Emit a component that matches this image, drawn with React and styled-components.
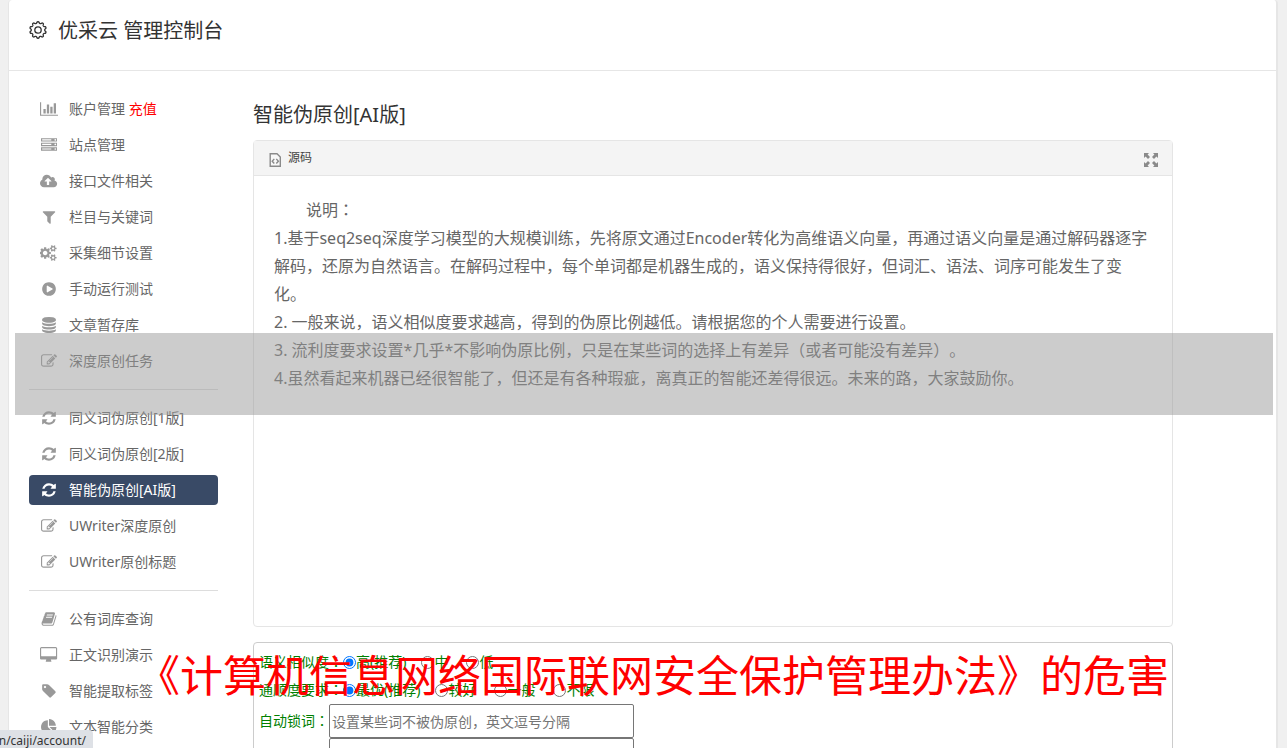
import React from 'react'
import styled, { createGlobalStyle } from 'styled-components'

const ICONS = {
  chart: [2048, 'M640 896v512h-256v-512h256zm384-512v1024h-256v-1024h256zm1024 1152v128h-2048v-1536h128v1408h1920zm-640-896v768h-256v-768h256zm384-384v1152h-256v-1152h256z'],
  server: [1792, 'M128 1408h1024v-128h-1024v128zm0-512h1024v-128h-1024v128zm1568 448q0-40-28-68t-68-28-68 28-28 68 28 68 68 28 68-28 28-68zm-1568-960h1024v-128h-1024v128zm1568 448q0-40-28-68t-68-28-68 28-28 68 28 68 68 28 68-28 28-68zm0-512q0-40-28-68t-68-28-68 28-28 68 28 68 68 28 68-28 28-68zm96 832v384h-1792v-384h1792zm0-512v384h-1792v-384h1792zm0-512v384h-1792v-384h1792z'],
  upload: [1920, 'M1280 928q0-14-9-23l-352-352q-9-9-23-9t-23 9l-351 351q-10 12-10 24 0 14 9 23t23 9h224v352q0 13 9.5 22.5t22.5 9.5h192q13 0 22.5-9.5t9.5-22.5v-352h224q13 0 22.5-9.5t9.5-22.5zm640 288q0 159-112.5 271.5t-271.5 112.5h-1088q-185 0-316.5-131.5t-131.5-316.5q0-130 70-240t188-165q-2-30-2-43 0-212 150-362t362-150q156 0 285.5 87t188.5 231q71-62 166-62 106 0 181 75t75 181q0 76-41 138 130 31 213.5 135.5t83.5 238.5z'],
  filter: [1792, 'M1595 295q17 41-14 70l-493 493v742q0 42-39 59-13 5-25 5-27 0-45-19l-256-256q-19-19-19-45v-486l-493-493q-31-29-14-70 17-39 59-39h1280q42 0 59 39z'],
  cogs: [1920, 'M832 896q0-106-75-181t-181-75-181 75-75 181 75 181 181 75 181-75 75-181zm768 512q0-52-38-90t-90-38-90 38-38 90q0 53 37.5 90.5t90.5 37.5 90.5-37.5 37.5-90.5zm0-1024q0-52-38-90t-90-38-90 38-38 90q0 53 37.5 90.5t90.5 37.5 90.5-37.5 37.5-90.5zm-384 421v185q0 10-7 19.5t-16 10.5l-155 24q-11 35-32 76 34 48 90 115 7 11 7 20 0 12-7 19-23 30-82.5 89.5t-78.5 59.5q-11 0-21-7l-115-90q-37 19-77 31-11 108-23 155-7 24-30 24h-186q-11 0-20-7.5t-10-17.5l-23-153q-34-10-75-31l-118 89q-7 7-20 7-11 0-21-8-144-133-144-160 0-9 7-19 10-14 41-53t47-61q-23-44-35-82l-152-24q-10-1-17-9.5t-7-19.5v-185q0-10 7-19.5t16-10.5l155-24q11-35 32-76-34-48-90-115-7-11-7-20 0-12 7-20 22-30 82-89t79-59q11 0 21 7l115 90q34-18 77-32 11-108 23-154 7-24 30-24h186q11 0 20 7.5t10 17.5l23 153q34 10 75 31l118-89q8-7 20-7 11 0 21 8 144 133 144 160 0 8-7 19-12 16-42 54t-45 60q23 48 34 82l152 23q10 2 17 10.5t7 19.5zm640 533v140q0 16-149 31-12 27-30 52 51 113 51 138 0 4-4 7-122 71-124 71-8 0-46-47t-52-68q-20 2-30 2t-30-2q-14 21-52 68t-46 47q-2 0-124-71-4-3-4-7 0-25 51-138-18-25-30-52-149-15-149-31v-140q0-16 149-31 13-29 30-52-51-113-51-138 0-4 4-7 4-2 35-20t59-34 30-16q8 0 46 46.5t52 67.5q20-2 30-2t30 2q51-71 92-112l6-2q4 0 124 70 4 3 4 7 0 25-51 138 17 23 30 52 149 15 149 31zm0-1024v140q0 16-149 31-12 27-30 52 51 113 51 138 0 4-4 7-122 71-124 71-8 0-46-47t-52-68q-20 2-30 2t-30-2q-14 21-52 68t-46 47q-2 0-124-71-4-3-4-7 0-25 51-138-18-25-30-52-149-15-149-31v-140q0-16 149-31 13-29 30-52-51-113-51-138 0-4 4-7 4-2 35-20t59-34 30-16q8 0 46 46.5t52 67.5q20-2 30-2t30 2q51-71 92-112l6-2q4 0 124 70 4 3 4 7 0 25-51 138 17 23 30 52 149 15 149 31z'],
  play: [1792, 'M896 128q209 0 385.5 103t279.5 279.5 103 385.5-103 385.5-279.5 279.5-385.5 103-385.5-103-279.5-279.5-103-385.5 103-385.5 279.5-279.5 385.5-103zm384 823q32-18 32-55t-32-55l-544-320q-31-19-64-1-32 19-32 56v640q0 37 32 56 16 8 32 8 17 0 32-9z'],
  database: [1792, 'M896 768q237 0 443-43t325-127v170q0 69-103 128t-280 93.5-385 34.5-385-34.5-280-93.5-103-128v-170q119 84 325 127t443 43zm0 768q237 0 443-43t325-127v170q0 69-103 128t-280 93.5-385 34.5-385-34.5-280-93.5-103-128v-170q119 84 325 127t443 43zm0-384q237 0 443-43t325-127v170q0 69-103 128t-280 93.5-385 34.5-385-34.5-280-93.5-103-128v-170q119 84 325 127t443 43zm0-1152q208 0 385 34.5t280 93.5 103 128v128q0 69-103 128t-280 93.5-385 34.5-385-34.5-280-93.5-103-128v-128q0-69 103-128t280-93.5 385-34.5z'],
  edit: [1792, 'M888 1184l116-116-152-152-116 116v56h96v96h56zm440-720q-16-16-33 1l-350 350q-17 17-1 33t33-1l350-350q17-17 1-33zm80 594v190q0 119-84.5 203.5t-203.5 84.5h-832q-119 0-203.5-84.5t-84.5-203.5v-832q0-119 84.5-203.5t203.5-84.5h832q63 0 117 25 15 7 18 23 3 17-9 29l-49 49q-14 14-32 8-23-6-45-6h-832q-66 0-113 47t-47 113v832q0 66 47 113t113 47h832q66 0 113-47t47-113v-126q0-13 9-22l64-64q15-15 35-7t20 29zm-96-738l288 288-672 672h-288v-288zm444 132l-92 92-288-288 92-92q28-28 68-28t68 28l152 152q28 28 28 68t-28 68z'],
  refresh: [1792, 'M1639 1056q0 5-1 7-64 268-268 434.5t-478 166.5q-146 0-282.5-55t-243.5-157l-129 129q-19 19-45 19t-45-19-19-45v-448q0-26 19-45t45-19h448q26 0 45 19t19 45-19 45l-137 137q71 66 161 102t187 36q134 0 250-65t186-179q11-17 53-117 8-23 30-23h192q13 0 22.5 9.5t9.5 22.5zm25-800v448q0 26-19 45t-45 19h-448q-26 0-45-19t-19-45 19-45l138-138q-148-137-349-137-134 0-250 65t-186 179q-11 17-53 117-8 23-30 23h-199q-13 0-22.5-9.5t-9.5-22.5v-7q65-268 270-434.5t480-166.5q146 0 284 55.5t245 156.5l130-129q19-19 45-19t45 19 19 45z'],
  book: [1792, 'M1703 478q40 57 18 129l-275 906q-19 64-76.5 107.5t-122.5 43.5h-923q-77 0-148.5-53.5t-99.5-131.5q-24-67-2-127 0-4 3-27t4-37q1-8-3-21.5t-3-19.5q2-11 8-21t16.5-23.5 16.5-23.5q23-38 45-91.5t30-91.5q3-10 .5-30t-.5-28q3-11 17-28t17-23q21-36 42-92t25-90q1-9-2.5-32t.5-28q4-13 22-30.5t22-22.5q19-26 42.5-84.5t27.5-96.5q1-8-3-25.5t-2-26.5q2-8 9-18t18-23 17-21q8-12 16.5-30.5t15-35 16-36 19.5-32 26.5-23.5 36-11.5 47.5 5.5l-1 3q38-9 51-9h761q74 0 114 56t18 130l-274 906q-36 119-71.5 153.5t-128.5 34.5h-869q-27 0-38 15-11 16-1 43 24 70 144 70h923q29 0 56-15.5t35-41.5l300-987q7-22 5-57 38 15 59 43zm-1064 2q-4 13 2 22.5t20 9.5h608q13 0 25.5-9.5t16.5-22.5l21-64q4-13-2-22.5t-20-9.5h-608q-13 0-25.5 9.5t-16.5 22.5zm-83 256q-4 13 2 22.5t20 9.5h608q13 0 25.5-9.5t16.5-22.5l21-64q4-13-2-22.5t-20-9.5h-608q-13 0-25.5 9.5t-16.5 22.5z'],
  desktop: [1920, 'M1792 992v-832q0-13-9.5-22.5t-22.5-9.5h-1600q-13 0-22.5 9.5t-9.5 22.5v832q0 13 9.5 22.5t22.5 9.5h1600q13 0 22.5-9.5t9.5-22.5zm128-832v1088q0 66-47 113t-113 47h-544q0 37 16 77.5t32 71 16 43.5q0 26-19 45t-45 19h-512q-26 0-45-19t-19-45q0-14 16-44t32-70 16-78h-544q-66 0-113-47t-47-113v-1088q0-66 47-113t113-47h1600q66 0 113 47t47 113z'],
  tag: [1792, 'M576 448q0-53-37.5-90.5t-90.5-37.5-90.5 37.5-37.5 90.5 37.5 90.5 90.5 37.5 90.5-37.5 37.5-90.5zm1067 576q0 53-37 90l-491 492q-39 37-91 37-53 0-90-37l-715-716q-38-37-64.5-101t-26.5-117v-416q0-52 38-90t90-38h416q53 0 117 26.5t102 64.5l715 714q37 39 37 91z'],
  pie: [1792, 'M768 890l546 546q-106 108-247.5 168t-298.5 60q-209 0-385.5-103t-279.5-279.5-103-385.5 103-385.5 279.5-279.5 385.5-103v762zm187 6h773q0 157-60 298.5t-168 247.5zm709-128h-768v-768q209 0 385.5 103t279.5 279.5 103 385.5z'],
}

const MENU = [
  [
    { icon: 'chart', label: '账户管理', extra: '充值' },
    { icon: 'server', label: '站点管理' },
    { icon: 'upload', label: '接口文件相关' },
    { icon: 'filter', label: '栏目与关键词' },
    { icon: 'cogs', label: '采集细节设置' },
    { icon: 'play', label: '手动运行测试' },
    { icon: 'database', label: '文章暂存库' },
    { icon: 'edit', label: '深度原创任务' },
  ],
  [
    { icon: 'refresh', label: '同义词伪原创[1版]' },
    { icon: 'refresh', label: '同义词伪原创[2版]' },
    { icon: 'refresh', label: '智能伪原创[AI版]', active: true },
    { icon: 'edit', label: 'UWriter深度原创' },
    { icon: 'edit', label: 'UWriter原创标题' },
  ],
  [
    { icon: 'book', label: '公有词库查询' },
    { icon: 'desktop', label: '正文识别演示' },
    { icon: 'tag', label: '智能提取标签' },
    { icon: 'pie', label: '文本智能分类' },
  ],
]

const OPTIONS = [
  { name: 'similarity', label: '语义相似度', choices: ['高(推荐)', '中', '低'] },
  { name: 'fluency', label: '通顺度要求', choices: ['最优(推荐)', '较好', '一般', '不限'] },
]

const App = () => (
  <>
    <GlobalStyle />
    <Page>
      <Card>
        <Header>
          <GearIcon />
          <h1>优采云 管理控制台</h1>
        </Header>
        <Body>
          <Sidebar>
            {MENU.map((items, index) => (
              <MenuGroup key={index}>
                {items.map(item => <MenuItem key={item.label} {...item} />)}
              </MenuGroup>
            ))}
          </Sidebar>
          <Main>
            <h2>智能伪原创[AI版]</h2>
            <Editor />
            <OptionsForm />
          </Main>
        </Body>
      </Card>
      <GreyBand />
      <Headline>《计算机信息网络国际联网安全保护管理办法》的危害</Headline>
      <StatusBar><span>n/caiji/account/</span></StatusBar>
    </Page>
  </>
)

const MenuItem = ({ icon, label, extra, active }) => {
  const [width, path] = ICONS[icon]
  return (
    <li>
      <MenuLink href='#' $active={active}>
        <IconSlot>
          <svg viewBox={`0 0 ${width} 1792`} height='16' fill='currentColor'><path d={path} /></svg>
        </IconSlot>
        <span>{label}{extra && <em> {extra}</em>}</span>
      </MenuLink>
    </li>
  )
}

const Editor = () => (
  <EditorBox>
    <Toolbar>
      <ToolButton type='button'><SourceIcon /><span>源码</span></ToolButton>
      <ToolButton type='button' aria-label='最大化'><ExpandIcon /></ToolButton>
    </Toolbar>
    <Content>
      <p className='lead'>说明<Colon>：</Colon></p>
      <p>1.基于seq2seq深度学习模型的大规模训练，先将原文通过Encoder转化为高维语义向量，再通过语义向量是通过解码器逐字解码，还原为自然语言。在解码过程中，每个单词都是机器生成的，语义保持得很好，但词汇、语法、词序可能发生了变化。</p>
      <p>2. 一般来说，语义相似度要求越高，得到的伪原比例越低。请根据您的个人需要进行设置。</p>
      <p>3. 流利度要求设置*几乎*不影响伪原比例，只是在某些词的选择上有差异（或者可能没有差异）。</p>
      <p>4.虽然看起来机器已经很智能了，但还是有各种瑕疵，离真正的智能还差得很远。未来的路，大家鼓励你。</p>
    </Content>
  </EditorBox>
)

const OptionsForm = () => (
  <Form>
    {OPTIONS.map(({ name, label, choices }) => (
      <RadioRow key={name} role='radiogroup' aria-label={label}>
        <span>{label}<Colon>：</Colon></span>
        {choices.map((choice, index) => (
          <label key={choice}>
            <input type='radio' name={name} defaultChecked={index === 0} />
            {choice}
          </label>
        ))}
      </RadioRow>
    ))}
    <FieldRow>
      <label htmlFor='lock-words'>自动锁词<Colon>：</Colon></label>
      <div>
        <input id='lock-words' placeholder='设置某些词不被伪原创，英文逗号分隔' />
        <input aria-label='锁词' />
      </div>
    </FieldRow>
  </Form>
)

const GearIcon = () => {
  const teeth = 10
  const steps = 120
  const points = Array.from({ length: steps }, (_, i) => {
    const angle = (i / steps) * Math.PI * 2
    const radius = 7.5 + 0.8 * Math.tanh(2 * Math.cos(angle * teeth))
    return `${(9 + radius * Math.sin(angle)).toFixed(2)} ${(9 - radius * Math.cos(angle)).toFixed(2)}`
  })
  return (
    <svg width='18' height='18' viewBox='0 0 18 18' fill='none' stroke='currentColor' strokeWidth='1.3'>
      <path d={`M${points.join('L')}Z`} strokeLinejoin='round' />
      <circle cx='9' cy='9' r='3.2' />
    </svg>
  )
}

const SourceIcon = () => (
  <svg width='13' height='14' viewBox='0 0 13 14' fill='none' stroke='#8a8a8a' strokeWidth='1.4'>
    <path d='M1.2.7h6.8l3.3 3.3v9.3H1.2z' fill='#f8f8f8' />
    <path d='M5.3 5.9L3.2 8.2l2.1 2.3M7.3 5.9l2.1 2.3-2.1 2.3' />
  </svg>
)

const ExpandIcon = () => (
  <svg width='14' height='14' viewBox='0 0 14 14' fill='#8a8a8a'>
    <path d='M0 0h5L3.6 1.6 6 4 4 6 1.6 3.6 0 5zM14 0v5l-1.6-1.4L10 6 8 4l2.4-2.4L9 0zM0 14V9l1.6 1.4L4 8l2 2-2.4 2.4L5 14zM14 14H9l1.4-1.6L8 10l2-2 2.4 2.4L14 9z' />
  </svg>
)

const GlobalStyle = createGlobalStyle`
  * { box-sizing: border-box; }
  body {
    margin: 0;
    overflow: hidden;
    background: #f0f0f0;
    color: #666;
    font: 14px/20px 'Noto Sans', 'Noto Sans CJK SC', sans-serif;
    text-spacing-trim: space-all;
  }
  h1, h2, p, ul { margin: 0; padding: 0; font-weight: 400; }
`

const Page = styled.div`
  position: relative;
  height: 100vh;
  overflow: hidden;
  padding: 0 9px 0 8px;
`

const Card = styled.div`
  min-height: 100%;
  background: #fff;
  border: solid #e6e6e6;
  border-width: 0 2px 0 1px;
  border-radius: 4px 4px 0 0;
`

const Header = styled.header`
  display: flex;
  align-items: flex-start;
  gap: 11px;
  padding: 17px 20px 25px;
  border-bottom: 1px solid #e6e6e6;
  color: #333;
  svg { margin-top: 4px; }
  h1 { font-size: 20px; line-height: 28px; }
`

const Body = styled.div`
  display: flex;
  gap: 35px;
  padding: 23px 103px 0 20px;
`

const Sidebar = styled.nav`
  flex: 0 0 189px;
`

const MenuGroup = styled.ul`
  list-style: none;
  display: grid;
  gap: 6px;
  & + & {
    margin-top: 13px;
    padding-top: 13px;
    border-top: 1px solid #ddd;
  }
`

const MenuLink = styled.a`
  display: flex;
  align-items: center;
  gap: 10px;
  height: 30px;
  padding: 0 10px;
  border-radius: 4px;
  background: ${({ $active }) => $active ? '#394a66' : 'transparent'};
  color: ${({ $active }) => $active ? '#fff' : '#666'};
  text-decoration: none;
  svg { color: ${({ $active }) => $active ? '#fff' : '#999'}; }
  em { color: #f00; font-style: normal; }
`

const IconSlot = styled.span`
  display: flex;
  justify-content: center;
  flex: 0 0 20px;
`

const Main = styled.main`
  flex: 1;
  min-width: 0;
  h2 {
    padding-top: 6px;
    margin-bottom: 10px;
    color: #333;
    font-size: 20px;
    line-height: 30px;
  }
`

const EditorBox = styled.section`
  border: 1px solid #e5e5e5;
  border-radius: 4px;
`

const Toolbar = styled.div`
  display: flex;
  justify-content: space-between;
  align-items: flex-end;
  height: 35px;
  padding: 0 14px 8px 15px;
  background: #f4f4f4;
  border-bottom: 1px solid #e5e5e5;
`

const ToolButton = styled.button`
  display: flex;
  align-items: flex-end;
  gap: 6px;
  padding: 0;
  border: 0;
  background: none;
  color: #444;
  font: inherit;
  font-size: 12px;
  line-height: 18px;
`

const Content = styled.div`
  min-height: 450px;
  padding: 20px;
  font-size: 16px;
  line-height: 28px;
  .lead { text-indent: 2em; }
`

const Form = styled.form`
  margin-top: 15px;
  padding: 5px;
  border: 1px solid #ccc;
  border-radius: 4px;
  color: #008000;
`

/* the TC face centres the full-width colon in its cell */
const Colon = styled.span`
  font-family: 'Noto Sans CJK TC', sans-serif;
  line-height: 1;
`

const RadioRow = styled.div`
  display: flex;
  align-items: center;
  height: 28px;
  label {
    display: flex;
    align-items: center;
    margin-right: 18px;
  }
  label:first-of-type { margin-right: 15px; }
  input { width: 13px; height: 13px; margin: 0; }
`

const FieldRow = styled.div`
  display: flex;
  label { line-height: 34px; }
  div { display: grid; flex: 0 1 305px; }
  input {
    width: 100%;
    height: 34px;
    padding: 0 2px;
    border: 1px solid #767676;
    border-radius: 2px;
    font: inherit;
  }
`

/* translucent strip lying over the whole card */
const GreyBand = styled.div`
  position: absolute;
  top: 333px;
  left: 15px;
  right: 14px;
  height: 82px;
  background: rgba(153, 153, 153, 0.5);
`

const Headline = styled.div`
  position: absolute;
  top: 646px;
  left: 137px;
  color: #f00;
  font-size: 43px;
  line-height: 60px;
  white-space: nowrap;
`

const StatusBar = styled.div`
  position: absolute;
  left: 0;
  bottom: 0;
  display: flex;
  justify-content: flex-end;
  width: 93px;
  height: 18px;
  padding-right: 7px;
  overflow: hidden;
  background: #dee1e6;
  border-top-right-radius: 4px;
  color: #333;
  font-size: 12px;
  line-height: 22px;
`

export default App
